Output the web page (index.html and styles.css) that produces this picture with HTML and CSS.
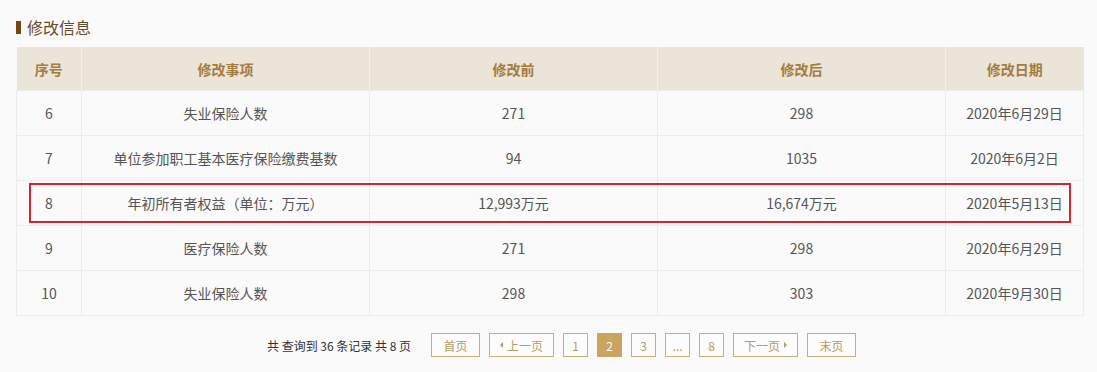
FILE: index.html
```html
<!DOCTYPE html>
<html lang="zh-CN">
<head>
<meta charset="utf-8">
<title>修改信息</title>
<link rel="stylesheet" href="styles.css">
</head>
<body>
<div class="page">
  <h2 class="title"><span class="bar"></span>修改信息</h2>
  <div class="table-wrap">
    <table class="grid">
      <colgroup>
        <col class="c-no"><col class="c-item"><col class="c-val"><col class="c-val"><col class="c-date">
      </colgroup>
      <thead>
        <tr><th>序号</th><th>修改事项</th><th>修改前</th><th>修改后</th><th>修改日期</th></tr>
      </thead>
      <tbody>
        <tr><td>6</td><td>失业保险人数</td><td>271</td><td>298</td><td>2020年6月29日</td></tr>
        <tr><td>7</td><td>单位参加职工基本医疗保险缴费基数</td><td>94</td><td>1035</td><td>2020年6月2日</td></tr>
        <tr><td>8</td><td>年初所有者权益（单位：万元）</td><td>12,993万元</td><td>16,674万元</td><td>2020年5月13日</td></tr>
        <tr><td>9</td><td>医疗保险人数</td><td>271</td><td>298</td><td>2020年6月29日</td></tr>
        <tr><td>10</td><td>失业保险人数</td><td>298</td><td>303</td><td>2020年9月30日</td></tr>
      </tbody>
    </table>
    <div class="highlight"></div>
  </div>
  <div class="pager">
    <span class="summary">共&nbsp;查询到&nbsp;36&nbsp;条记录&nbsp;共&nbsp;8&nbsp;页</span>
    <a class="btn wide">首页</a>
    <a class="btn wider"><span class="tri-l"></span>上一页</a>
    <a class="btn num">1</a>
    <a class="btn num active">2</a>
    <a class="btn num">3</a>
    <a class="btn num">...</a>
    <a class="btn num">8</a>
    <a class="btn wider">下一页<span class="tri-r"></span></a>
    <a class="btn wide">末页</a>
  </div>
</div>
</body>
</html>
```
FILE: styles.css
```css
html, body {
  margin: 0;
  padding: 0;
  background: #fafafa;
}
body {
  font-family: "Noto Sans CJK SC", sans-serif;
  color: #555;
}
.page {
  padding: 15px 14px 0 16px;
  width: 1067px;
}
.title {
  display: flex;
  align-items: center;
  margin: 0 0 8px 0;
  height: 24px;
  font-size: 16px;
  font-weight: normal;
  color: #6b4a2a;
  font-family: "Noto Sans CJK SC", sans-serif;
}
.bar {
  display: inline-block;
  width: 5px;
  height: 13px;
  background: #7a4410;
  margin-right: 6px;
}
.table-wrap {
  position: relative;
}
.grid {
  width: 1067px;
  border-collapse: collapse;
  table-layout: fixed;
  font-size: 14px;
}
.c-no { width: 65px; }
.c-item { width: 288px; }
.c-val { width: 288px; }
.c-date { width: 138px; }
.grid th {
  height: 43px;
  padding: 0;
  background: #eae4d9;
  color: #a47c3e;
  font-weight: bold;
  font-family: "Noto Sans CJK SC", sans-serif;
  font-size: 14px;
  border-right: 1px solid #f3efe8;
  text-align: center;
}
.grid th:last-child { border-right: 0; }
.grid td {
  height: 44px;
  padding: 0;
  text-align: center;
  color: #555;
  border: 1px solid #ececec;
  font-family: "Noto Sans CJK SC", sans-serif;
}
.highlight {
  position: absolute;
  left: 13px;
  top: 136px;
  width: 1038px;
  height: 36px;
  border: 2px solid #d8232f;
  pointer-events: none;
}
.pager {
  display: flex;
  align-items: center;
  justify-content: center;
  padding-left: 24px;
  margin-top: 17px;
  font-size: 12px;
  font-family: "Noto Sans CJK SC", sans-serif;
}
.summary {
  color: #333;
  margin-right: 20px;
}
.btn {
  box-sizing: border-box;
  height: 24px;
  display: inline-flex;
  align-items: center;
  justify-content: center;
  border: 1px solid #c9ad78;
  color: #b99a62;
  background: #fcfcfc;
  margin-right: 9px;
  font-size: 12px;
}
.btn:last-child { margin-right: 0; }
.wide { width: 49px; }
.wider { width: 65px; }
.num { width: 25px; }
.active {
  background: #c9a560;
  border-color: #c9a560;
  color: #fff;
}
.tri-l, .tri-r {
  display: inline-block;
  width: 0;
  height: 0;
  border-top: 3px solid transparent;
  border-bottom: 3px solid transparent;
}
.tri-l {
  border-right: 3px solid #b99a62;
  margin-right: 4px;
}
.tri-r {
  border-left: 3px solid #b99a62;
  margin-left: 4px;
}
```
